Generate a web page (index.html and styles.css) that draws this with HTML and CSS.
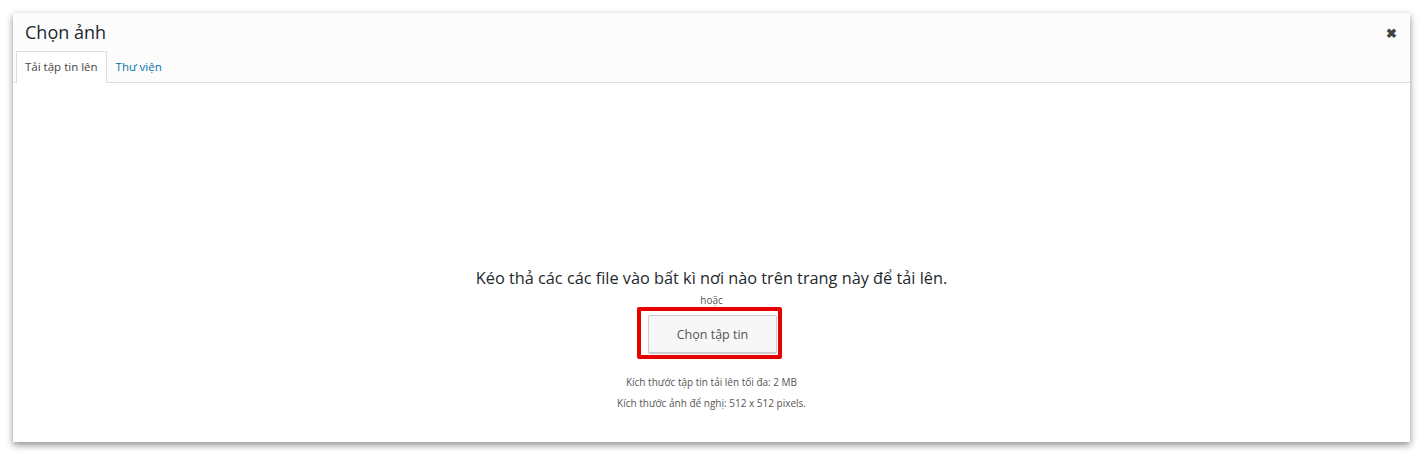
FILE: index.html
```html
<!DOCTYPE html>
<html lang="vi">
<head>
  <meta charset="UTF-8">
  <title>Chọn ảnh</title>
  <link rel="stylesheet" href="styles.css">
</head>
<body>
  <div class="modal">
    <!-- Header with title and tabs -->
    <div class="modal-head">
      <div class="title-row">
        <h1>Chọn ảnh</h1>
        <span class="close">&#x2716;</span>
      </div>
      <div class="tabs">
        <a class="tab active">Tải tập tin lên</a>
        <a class="tab">Thư viện</a>
      </div>
    </div>

    <!-- Upload area -->
    <div class="upload">
      <p class="drop-text">Kéo thả các các file vào bất kì nơi nào trên trang này để tải lên.</p>
      <p class="or">hoặc</p>
      <div class="highlight">
        <button class="pick">Chọn tập tin</button>
      </div>
      <p class="info">Kích thước tập tin tải lên tối đa: 2 MB</p>
      <p class="info">Kích thước ảnh để nghị: 512 x 512 pixels.</p>
    </div>
  </div>
</body>
</html>
```

FILE: styles.css
```css
body {
  margin: 0;
  padding: 13px 14px 14px 13px;
  background-color: #fff;
  font-family: 'Open Sans', 'Noto Sans', sans-serif;
  color: #333;
}
.modal {
  height: 429px;
  background-color: #fff;
  box-shadow: 0 3px 7px rgba(0, 0, 0, 0.45);
  display: flex;
  flex-direction: column;
}
.modal-head {
  background-color: #fcfcfc;
  border-bottom: 1px solid #ddd;
}
.title-row {
  display: flex;
  justify-content: space-between;
  align-items: center;
  padding: 0 13px 0 12px;
  height: 38px;
}
h1 {
  margin: 0;
  font-size: 18px;
  font-weight: normal;
  color: #23282d;
}
.close {
  font-size: 13px;
  color: #444;
  font-weight: bold;
  margin-top: 2px;
}
.tabs {
  display: flex;
  padding: 0 3px;
  margin-bottom: -1px;
}
.tab {
  font-size: 11.5px;
  padding: 0 8px;
  height: 30px;
  line-height: 30px;
  color: #0073aa;
  border: 1px solid transparent;
  border-bottom: none;
}
.tab.active {
  color: #444;
  background-color: #fff;
  border-color: #ddd;
  height: 31px;
}
.upload {
  flex: 1;
  display: flex;
  flex-direction: column;
  align-items: center;
  padding-top: 183px;
}
.upload p {
  margin: 0;
}
.drop-text {
  font-size: 16.3px;
  color: #23282d;
  line-height: 24px;
}
.or {
  font-size: 10px;
  color: #555;
  margin-top: 3px !important;
  line-height: 14px;
}
.highlight {
  border: 4px solid #e60000;
  border-radius: 2px;
  padding: 4px 1px 2px 7px;
  margin-right: 4px;
}
.pick {
  width: 129px;
  height: 38px;
  font-family: inherit;
  font-size: 12.5px;
  color: #555;
  background-color: #f7f7f7;
  border: 1px solid #ccc;
  border-radius: 2px;
  box-shadow: 0 1px 0 #ccc;
}
.info {
  font-size: 10px;
  color: #555;
  line-height: 21px;
}
.highlight + .info {
  margin-top: 13px;
}
```
